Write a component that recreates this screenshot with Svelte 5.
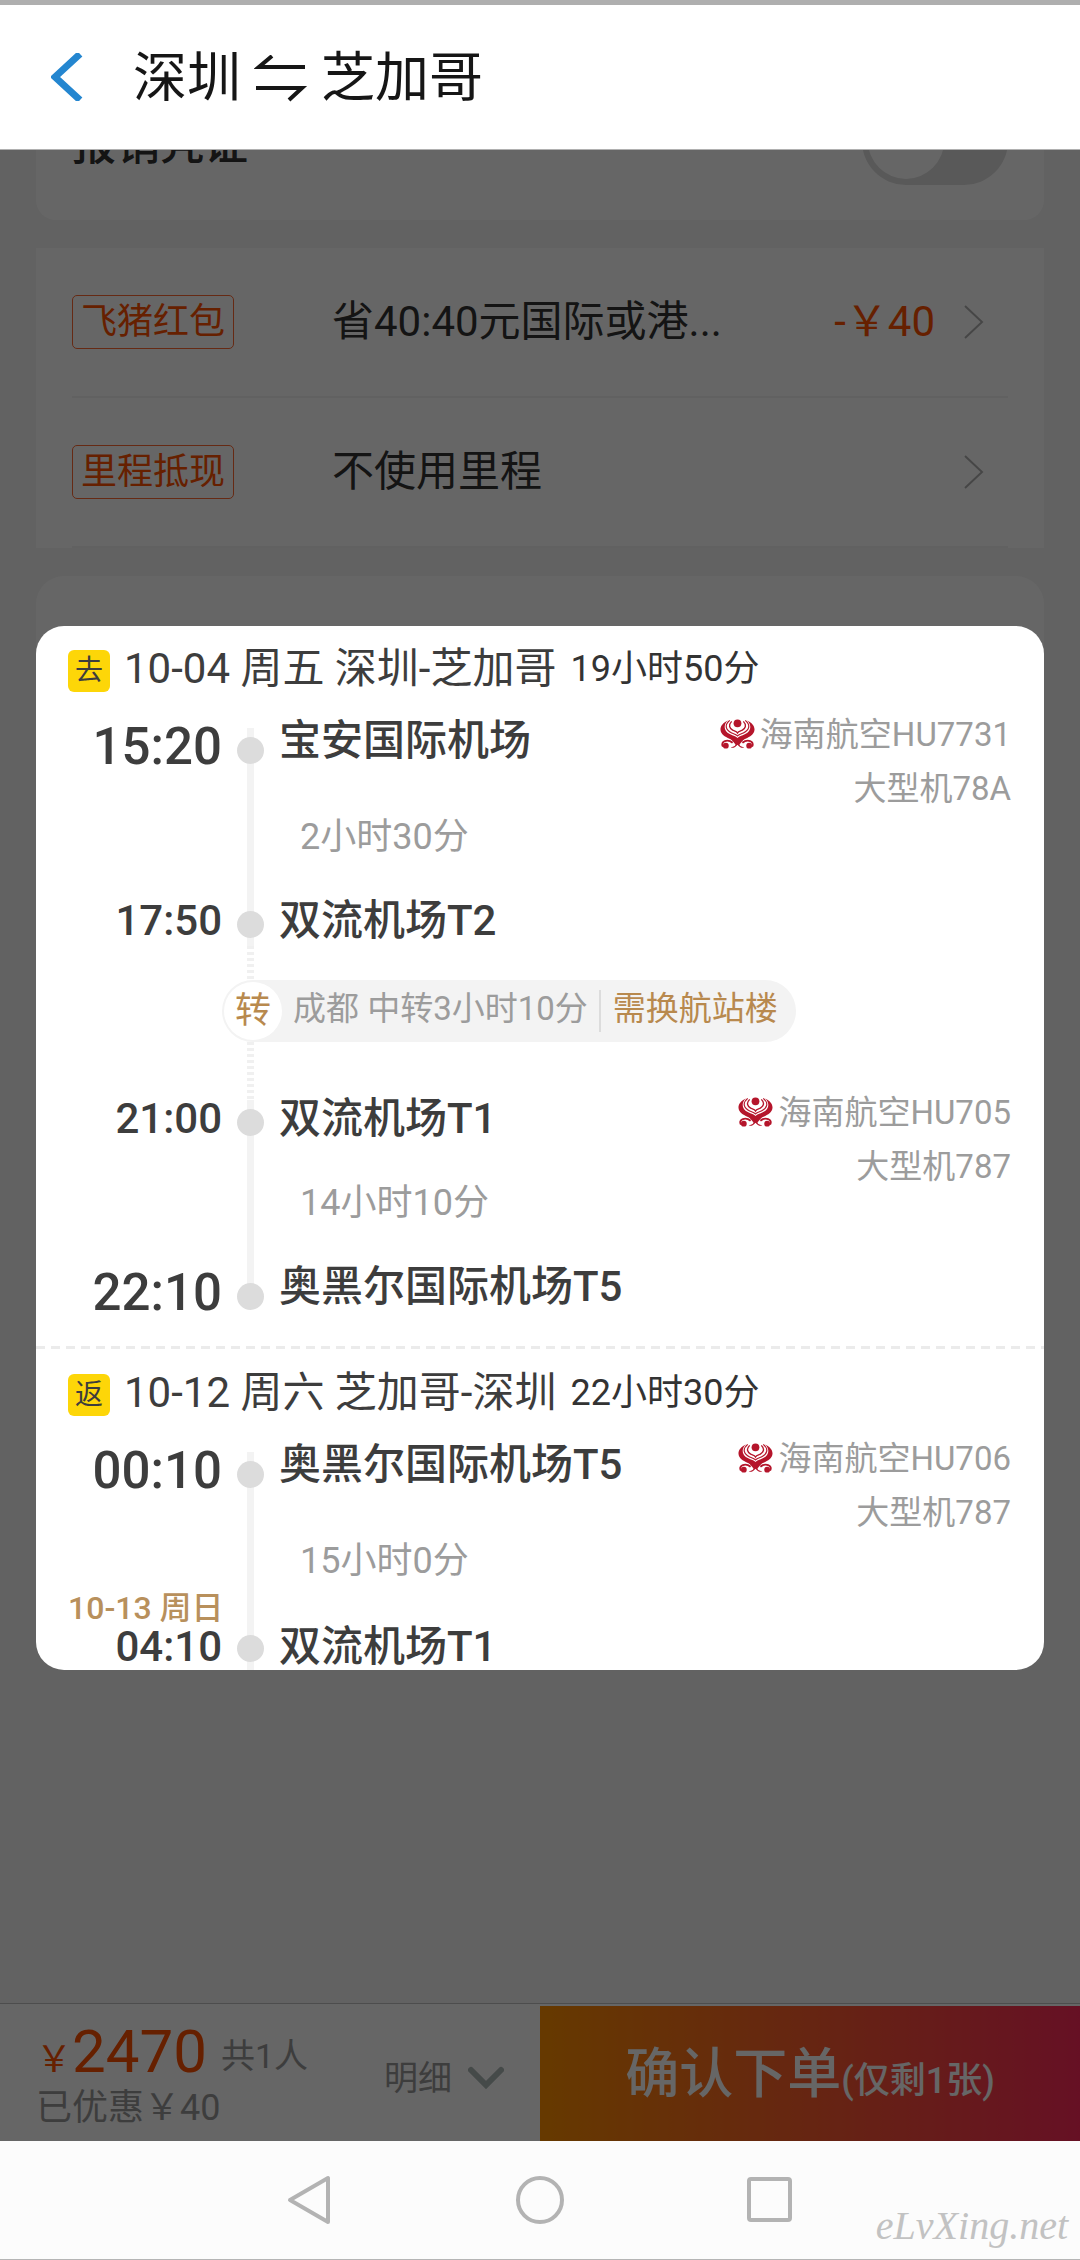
<script lang="ts">
  interface Stop {
    time: string;
    airport: string;
    terminus?: boolean;
    date?: string;
  }

  interface Flight {
    from: Stop;
    to: Stop;
    duration: string;
    flightNo: string;
    aircraft: string;
    open?: boolean;
  }

  interface Leg {
    tag: string;
    title: string;
    total: string;
    flights: Flight[];
    transfer?: { text: string; note: string };
  }

  const legs: Leg[] = [
    {
      tag: '去',
      title: '10-04 周五 深圳-芝加哥',
      total: '19小时50分',
      flights: [
        {
          from: { time: '15:20', airport: '宝安国际机场', terminus: true },
          to: { time: '17:50', airport: '双流机场T2' },
          duration: '2小时30分',
          flightNo: '海南航空HU7731',
          aircraft: '大型机78A',
          open: true
        },
        {
          from: { time: '21:00', airport: '双流机场T1' },
          to: { time: '22:10', airport: '奥黑尔国际机场T5', terminus: true },
          duration: '14小时10分',
          flightNo: '海南航空HU705',
          aircraft: '大型机787'
        }
      ],
      transfer: { text: '成都 中转3小时10分', note: '需换航站楼' }
    },
    {
      tag: '返',
      title: '10-12 周六 芝加哥-深圳',
      total: '22小时30分',
      flights: [
        {
          from: { time: '00:10', airport: '奥黑尔国际机场T5', terminus: true },
          to: { time: '04:10', airport: '双流机场T1', date: '10-13 周日' },
          duration: '15小时0分',
          flightNo: '海南航空HU706',
          aircraft: '大型机787',
          open: true
        }
      ]
    }
  ];

  const discounts = [
    { tag: '飞猪红包', text: '省40:40元国际或港...', amount: '-￥40' },
    { tag: '里程抵现', text: '不使用里程', amount: '' }
  ];

  let needReceipt = $state(false);
</script>

{#snippet airlineLogo()}
  <svg class="airline-logo" viewBox="0 0 36 32" aria-hidden="true">
    <g fill="#b5152b">
      <path d="M8 2C-3 7-1 17 8 20c5 2 8 4 10 7 2-3 5-5 10-7 9-3 11-13 0-18 5 5 4 11-2 14-4 2-6 2-8 4-2-2-4-2-8-4C4 13 3 7 8 2z" />
      <path d="M10 19l8 6 8-6c-2 4-5 6-6 8 1 2 3 2 5 3-3 1-5-1-7-3-2 2-4 4-7 3 2-1 4-1 5-3-1-2-4-4-6-8z" />
      <circle cx="18" cy="5" r="4" />
      <circle cx="6" cy="28" r="3" />
      <circle cx="30" cy="28" r="3" />
    </g>
    <g fill="none" stroke="#b5152b">
      <path d="M10 2c-6 5-4 10 2 13 2 1 4 1 6 3 2-2 4-2 6-3 6-3 8-8 2-13" stroke-width="1.2" />
      <path d="M12 3c-4 4-2 7 1 9 2 1 4 1 5 3 1-2 3-2 5-3 3-2 5-5 1-9" stroke-width="1.4" />
      <path d="M3 29c-3-6 5-8 10-4M33 29c3-6-5-8-10-4" stroke-width="2" />
    </g>
  </svg>
{/snippet}

{#snippet stopRow(stop: Stop)}
  <span class="time" class:terminus={stop.terminus} class:dated={stop.date}>{stop.time}</span>
  <span class="track"><i class="dot"></i></span>
  <span class="airport" class:terminus={stop.terminus} class:dated={stop.date}>{stop.airport}</span>
{/snippet}

<div class="page">
  <header>
    <button class="back" aria-label="返回">
      <svg viewBox="0 0 32 48" width="32" height="48">
        <path d="M29 1L4 24l25 23" fill="none" stroke="#2486d0" stroke-width="7" />
      </svg>
    </button>
    <h1>
      深圳
      <svg viewBox="0 0 54 48" width="54" height="48" role="img" aria-label="往返">
        <path d="M18 1L5 12h46M2 33h46L35 45" fill="none" stroke="#161616" stroke-width="4" />
      </svg>
      芝加哥
    </h1>
  </header>

  <main>
    <div class="content">
      <section class="card receipt">
        <label for="receipt">报销凭证</label>
        <input id="receipt" class="switch" type="checkbox" role="switch" bind:checked={needReceipt} />
      </section>

      <section class="card discounts">
        {#each discounts as item}
          <button class="discount">
            <span><span class="tag">{item.tag}</span></span>
            <span>{item.text}</span>
            <span class="amount">{item.amount}</span>
            <svg viewBox="0 0 22 34" width="22" height="34" aria-hidden="true">
              <path d="M2 1l17 16L2 33" fill="none" stroke="#b0b0b0" stroke-width="2" />
            </svg>
          </button>
        {/each}
      </section>

      <section class="card rest"></section>
    </div>

    <footer>
      <div class="summary">
        <div class="price">
          <div class="total"><strong><small>￥</small>2470</strong><span>共1人</span></div>
          <div>已优惠￥40</div>
        </div>
        <button class="detail">
          明细
          <svg viewBox="0 0 36 24" width="36" height="24" aria-hidden="true">
            <path d="M3 4l15 15L33 4" fill="none" stroke="#adb8b6" stroke-width="6" stroke-linecap="round" />
          </svg>
        </button>
      </div>
      <button class="submit">确认下单<small>(仅剩1张)</small></button>
    </footer>

    <div class="overlay">
      <div class="dialog" role="dialog" aria-label="航班详情">
        {#each legs as leg}
          <section class="leg">
            <h2>
              <span class="badge">{leg.tag}</span>
              <span>{leg.title}</span>
              <span class="total-time">{leg.total}</span>
            </h2>
            {#each leg.flights as flight, i}
              {#if i > 0 && leg.transfer}
                <div class="transfer">
                  <i class="dots"></i>
                  <div class="chip">
                    <span class="turn">转</span>
                    <span class="where">{leg.transfer.text}</span>
                    <span class="note">{leg.transfer.note}</span>
                  </div>
                  <i class="dots long"></i>
                </div>
              {/if}
              <div class="flight" class:open={flight.open}>
                {@render stopRow(flight.from)}
                <div class="plane" class:terminus={flight.from.terminus}>
                  <span>{@render airlineLogo()}{flight.flightNo}</span>
                  <span>{flight.aircraft}</span>
                </div>
                <span class="date">{flight.to.date ?? ''}</span>
                <span class="track"></span>
                <span class="duration">{flight.duration}</span>
                {@render stopRow(flight.to)}
              </div>
            {/each}
          </section>
        {/each}
      </div>
    </div>
  </main>

  <nav>
    <button aria-label="后退">
      <svg viewBox="0 0 52 52" width="52" height="52">
        <path d="M44 4v44L6 26z" fill="none" stroke="#b3b3b3" stroke-width="4" stroke-linejoin="round" />
      </svg>
    </button>
    <button aria-label="主页">
      <svg viewBox="0 0 52 52" width="52" height="52">
        <circle cx="26" cy="26" r="22" fill="none" stroke="#b3b3b3" stroke-width="4" />
      </svg>
    </button>
    <button aria-label="最近任务">
      <svg viewBox="0 0 52 52" width="52" height="52">
        <rect x="5" y="5" width="41" height="41" rx="2" fill="none" stroke="#b3b3b3" stroke-width="4" />
      </svg>
    </button>
    <span class="watermark">eLvXing.net</span>
  </nav>
</div>

<style>
  :global(body) {
    margin: 0;
    background: #f5f5f5;
  }

  .page {
    display: flex;
    flex-direction: column;
    min-height: 100vh;
    font-family: Roboto, 'Noto Sans CJK SC', sans-serif;
    font-size: 36px;
    color: #3d3d3d;
  }

  button {
    padding: 0;
    border: none;
    background: none;
    font: inherit;
    color: inherit;
    text-align: left;
    cursor: pointer;
  }

  svg {
    display: block;
  }

  header {
    display: flex;
    align-items: center;
    gap: 50px;
    height: 144px;
    padding-left: 51px;
    border-top: 5px solid #afafaf;
    border-bottom: 1px solid #b0b0b0;
    background: #fff;
  }

  h1 {
    display: flex;
    align-items: center;
    gap: 13px;
    margin: 0;
    padding-top: 4px;
    font-size: 54px;
    font-weight: 400;
    line-height: 64px;
    color: #161616;
  }

  main {
    position: relative;
    display: flex;
    flex: 1;
    flex-direction: column;
    overflow: hidden;
  }

  .content {
    display: flex;
    flex: 1;
    flex-direction: column;
    gap: 28px;
    /* scrolled part of the order form */
    margin-top: -88px;
    padding: 0 36px 400px;
    color: #333;
  }

  .card {
    background: #fff;
  }

  .receipt {
    display: flex;
    align-items: center;
    justify-content: space-between;
    height: 158px;
    padding: 0 36px;
    border-radius: 20px;
    font-size: 44px;
    font-weight: 500;
  }

  .switch {
    width: 146px;
    height: 88px;
    margin: 0;
    padding: 6px;
    border-radius: 44px;
    background: #dedede;
    appearance: none;
  }

  .switch::before {
    content: '';
    display: block;
    width: 76px;
    height: 76px;
    border-radius: 50%;
    background: #fff;
  }

  .switch:checked::before {
    margin-left: auto;
  }

  .discounts {
    padding: 0 36px;
  }

  .discount {
    display: grid;
    grid-template-columns: 260px 1fr auto 22px;
    align-items: center;
    width: 100%;
    height: 150px;
    padding-right: 23px;
    border-bottom: 2px solid #f3f3f3;
    font-size: 42px;
    line-height: 42px;
  }

  .tag {
    display: inline-block;
    padding: 0 8px;
    border: 1px solid #ff6a33;
    border-radius: 5px;
    font-size: 36px;
    line-height: 52px;
    color: #ff5000;
  }

  .amount {
    margin-right: 28px;
    color: #ff5000;
  }

  .rest {
    flex: 1;
    border-radius: 28px;
  }

  footer {
    display: grid;
    grid-template-columns: 1fr 1fr;
    height: 137px;
    border-top: 1px solid #c0c0c0;
    background: #fff;
    color: #999;
  }

  .summary {
    display: flex;
    align-items: center;
    justify-content: space-between;
    padding: 10px 36px 0;
    line-height: 44px;
  }

  .total {
    display: flex;
    align-items: center;
    gap: 14px;
    height: 60px;
    font-size: 34px;
  }

  .total strong {
    font-size: 60px;
    font-weight: 400;
    line-height: 60px;
    color: #ff5000;
  }

  .total small {
    font-size: 36px;
  }

  .detail {
    display: flex;
    align-items: center;
    gap: 16px;
    font-size: 34px;
  }

  .submit {
    margin-top: 2px;
    padding-bottom: 8px;
    background: linear-gradient(90deg, #ff9000, #ff2a5b);
    font-size: 54px;
    font-weight: 500;
    text-align: center;
    color: #fff;
  }

  .submit small {
    font-size: 36px;
  }

  .overlay {
    position: absolute;
    inset: 0;
    display: flex;
    align-items: center;
    padding: 5px 36px 0;
    background: rgba(0, 0, 0, 0.6);
  }

  .dialog {
    flex: 1;
    overflow: hidden;
    border-radius: 28px;
    background: #fff;
  }

  .leg {
    padding: 24px 33px 0 32px;
  }

  .leg + .leg::before {
    content: '';
    display: block;
    height: 3px;
    margin: 4px -33px 25px -32px;
    background: repeating-linear-gradient(90deg, #ebebeb 0 9px, transparent 9px 15px);
  }

  h2 {
    display: flex;
    align-items: flex-start;
    gap: 14px;
    height: 42px;
    margin: 0 0 36px;
    font-size: 42px;
    font-weight: 400;
    line-height: 38px;
  }

  .badge {
    width: 42px;
    border-radius: 6px;
    background: #fdd608;
    font-size: 28px;
    line-height: 42px;
    text-align: center;
  }

  .total-time {
    font-size: 36px;
    color: #333;
  }

  .flight {
    display: grid;
    grid-template-columns: 154px 27px 1fr auto;
    grid-template-rows: 44px 130px 44px;
    column-gap: 15px;
    align-items: center;
  }

  .time,
  .airport {
    padding-bottom: 6px;
    font-size: 42px;
    font-weight: 500;
    line-height: 42px;
    white-space: nowrap;
  }

  .time {
    grid-column: 1;
    text-align: right;
  }

  .time.terminus {
    font-size: 51px;
  }

  .airport.terminus {
    padding-bottom: 18px;
  }

  .time.dated,
  .airport.dated {
    padding-bottom: 2px;
  }

  .track {
    display: flex;
    align-items: center;
    justify-content: center;
    align-self: stretch;
    background: linear-gradient(#f3f3f3, #f3f3f3) center top / 7px 100% no-repeat;
  }

  /* the line stops at the last dot of a leg */
  .flight:not(.open) .duration ~ .track {
    background-size: 7px 50%;
  }

  .dot {
    width: 27px;
    height: 27px;
    border-radius: 50%;
    background: #dcdcdc;
  }

  .plane {
    display: flex;
    grid-row: 1 / span 2;
    grid-column: 4;
    flex-direction: column;
    align-items: flex-end;
    align-self: start;
    gap: 21px;
    margin-top: -4px;
    font-size: 33px;
    line-height: 33px;
    color: #9c9c9c;
  }

  .plane.terminus {
    margin-top: -10px;
  }

  .plane > span {
    display: flex;
    gap: 5px;
  }

  .airline-logo {
    width: 35px;
    height: 32px;
  }

  .date {
    grid-column: 1;
    align-self: end;
    font-size: 32px;
    font-weight: 500;
    line-height: 36px;
    text-align: right;
    white-space: nowrap;
    color: #b8905c;
  }

  .duration {
    padding-left: 21px;
    line-height: 42px;
    color: #9c9c9c;
  }

  .flight:not(.open) .duration {
    padding-bottom: 12px;
  }

  .transfer {
    display: flex;
    flex-direction: column;
    align-items: flex-start;
    padding-left: 154px;
  }

  .dots {
    width: 7px;
    height: 34px;
    margin-left: 25px;
    background: repeating-linear-gradient(#f0f0f0 0 3px, transparent 3px 6px);
  }

  .dots.long {
    height: 58px;
  }

  .chip {
    display: flex;
    align-items: center;
    gap: 11px;
    padding: 2px 18px 2px 2px;
    border-radius: 31px;
    background: #f3f3f3;
    font-size: 33px;
    line-height: 38px;
    color: #9c9c9c;
  }

  .turn {
    width: 58px;
    border-radius: 50%;
    background: #fff;
    font-size: 36px;
    line-height: 58px;
    text-align: center;
    color: #b8894e;
  }

  .where,
  .note {
    padding-bottom: 4px;
  }

  .note {
    padding-left: 12px;
    border-left: 2px solid #dcdcdc;
    color: #b8894e;
  }

  nav {
    position: relative;
    display: flex;
    align-items: center;
    justify-content: center;
    gap: 178px;
    height: 118px;
    border-bottom: 1px solid #b5b5b5;
    background: #fcfcfc;
  }

  .watermark {
    position: absolute;
    right: 12px;
    bottom: 10px;
    font-family: 'Liberation Serif', cursive;
    font-size: 40px;
    font-style: italic;
    color: #c2c2c2;
  }
</style>
